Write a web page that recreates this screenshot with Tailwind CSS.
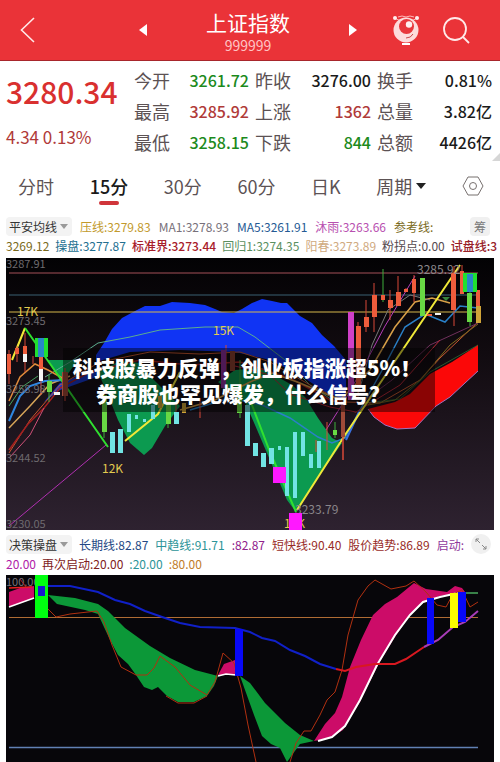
<!DOCTYPE html>
<html lang="zh-CN">
<head>
  <meta charset="UTF-8" />
  <meta name="viewport" content="width=device-width, initial-scale=1.0" />
  <title>上证指数 999999</title>
  <script src="https://cdn.jsdelivr.net/npm/@tailwindcss/browser@4"></script>
</head>
<body class="bg-white font-['Noto_Sans_CJK_SC',sans-serif] text-[#5c5254] overflow-x-hidden">

  <!-- top bar -->
  <header class="flex items-center h-[61px] bg-[#ea3338] border-b border-[#a8262c] pl-5 pr-[30px] text-white">
    <button aria-label="返回" class="w-4">
      <svg viewBox="0 0 16 28" class="w-4 h-7" fill="none" stroke="#ffe9e9" stroke-width="1.6"><path d="M14 2 1.500 14 14 26" /></svg>
    </button>
    <div class="flex flex-1 items-center justify-between pl-[102px] pr-[34px]">
      <button aria-label="上一个">
        <svg viewBox="0 0 10 12" class="w-[10px] h-3" fill="#fff"><path d="M9 0v12L1 6z" /></svg>
      </button>
      <div class="text-center pt-1">
        <h1 class="text-[21px] leading-[26px]">上证指数</h1>
        <p class="text-[14px] leading-5 text-[#ffc4c4]">999999</p>
      </div>
      <button aria-label="下一个">
        <svg viewBox="0 0 10 12" class="w-[10px] h-3" fill="#fff"><path d="M1 0v12l8-6z" /></svg>
      </button>
    </div>
    <div class="flex items-center gap-[22px]">
      <button aria-label="助手">
        <svg viewBox="0 0 28 32" class="w-7 h-8">
          <path d="M3 4l5 3M25 4l-5 3M6 3q4-2 8 0 4-2 8 0" stroke="#ffb9b9" fill="none" />
          <circle cx="3" cy="4" r="2" fill="#fff0f0" /><circle cx="25" cy="4" r="2" fill="#fff0f0" />
          <circle cx="14" cy="16" r="12.500" fill="#fddcdc" />
          <circle cx="14.500" cy="12.500" r="7.500" fill="#e8373c" />
          <circle cx="17" cy="10.500" r="3.200" fill="#fff0f0" />
          <path d="M14 24q5 0 7-4" stroke="#c8484c" fill="none" />
          <path d="M10 30h8" stroke="#fff" stroke-width="2" />
        </svg>
      </button>
      <button aria-label="搜索">
        <svg viewBox="0 0 28 28" class="w-7 h-7" fill="none" stroke="#ffe9e9" stroke-width="1.800"><circle cx="13" cy="13" r="11" /><path d="M21 21l6 6" /></svg>
      </button>
    </div>
  </header>

  <!-- quote -->
  <section class="relative flex justify-between pl-[6px] pr-2 pt-1 h-[100px]">
    <div>
      <p class="text-[30px] leading-[32px] font-medium text-[#d9302f] pt-[10px]">3280.34</p>
      <p class="text-[17px] leading-5 text-[#b03a38] pt-5">4.34 0.13%</p>
    </div>
    <dl class="grid content-start grid-cols-[36px_85px_36px_86px_36px_79px] text-[18px] leading-[31px] [&>dd]:text-right [&>dd]:text-[16px] [&>dd]:leading-[31px] [&>dd]:font-medium">
      <dt>今开</dt><dd class="text-[#1c8a1c] pr-[6px]">3261.72</dd>
      <dt>昨收</dt><dd class="text-[#1a1a1a] pr-[6px]">3276.00</dd>
      <dt>换手</dt><dd class="text-[#1a1a1a]">0.81%</dd>
      <dt>最高</dt><dd class="text-[#b03a38] pr-[6px]">3285.92</dd>
      <dt>上涨</dt><dd class="text-[#b03a38] pr-[6px]">1362</dd>
      <dt>总量</dt><dd class="text-[#1a1a1a]">3.82亿</dd>
      <dt>最低</dt><dd class="text-[#1c8a1c] pr-[6px]">3258.15</dd>
      <dt>下跌</dt><dd class="text-[#1c8a1c] pr-[6px]">844</dd>
      <dt>总额</dt><dd class="text-[#1a1a1a]">4426亿</dd>
    </dl>
    <svg viewBox="0 0 8 8" class="absolute right-0 bottom-0 w-2 h-2" fill="#d6d6d6"><path d="M8 0v8H0z" /></svg>
  </section>

  <!-- period tabs -->
  <nav class="flex items-center justify-between h-[56px] pl-[18px] pr-4 pb-[6px] text-[18px] leading-6">
    <button>分时</button>
    <button class="relative font-medium text-[#1a1a1a]">15分<span class="absolute left-1/2 -ml-[10px] -bottom-[7px] w-5 h-1 rounded-sm bg-[#d0353a]"></span></button>
    <button>30分</button>
    <button>60分</button>
    <button>日K</button>
    <button class="flex items-center gap-1">周期
      <svg viewBox="0 0 10 6" class="w-[10px] h-[6px]" fill="#222"><path d="M0 0h10L5 6z" /></svg>
    </button>
    <button aria-label="设置">
      <svg viewBox="0 0 22 20" class="w-[22px] h-5" fill="none" stroke="#77706f"><path d="M6 1h10l5 9-5 9H6l-5-9z" /><circle cx="11" cy="10" r="3.500" /></svg>
    </button>
  </nav>

  <!-- main chart legend -->
  <section class="pl-[6px] text-[12px] leading-[19px] whitespace-nowrap overflow-hidden">
    <div class="flex items-center gap-2">
      <button class="flex items-center gap-[3px] h-[19px] pl-[3px] pr-1 bg-[#f3f3f3] rounded text-[#333]">平安均线
        <svg viewBox="0 0 8 5" class="w-2 h-[5px]" fill="#999"><path d="M0 0h8L4 5z" /></svg>
      </button>
      <span class="text-[#c29a2c]">压线:3279.83</span>
      <span class="text-[#77707a]">MA1:3278.93</span>
      <span class="text-[#245a94]">MA5:3261.91</span>
      <span class="text-[#b850b0]">沐雨:3263.66</span>
      <span class="text-[#7a6a20]">参考线:</span>
      <button class="ml-auto mr-[10px] px-1 bg-[#f0f0f0] rounded text-[#777]">筹</button>
    </div>
    <div class="flex gap-[6px] pb-[3px]">
      <span class="text-[#7a6a20]">3269.12</span>
      <span class="text-[#236f90]">操盘:3277.87</span>
      <span class="font-medium text-[#a8202a]">标准界:3273.44</span>
      <span class="text-[#5a9060]">回归1:3274.35</span>
      <span class="text-[#d0aa80]">阳春:3273.89</span>
      <span class="text-[#554a50]">粉拐点:0.00</span>
      <span class="font-medium text-[#982028]">试盘线:3</span>
    </div>
  </section>

  <!-- main chart, drawn in screen units -->
  <section class="relative px-[6px]">
    <svg viewBox="6 258 488 272" class="block w-full" fill="none">
      <defs>
        <linearGradient id="night" x1="0" y1="0" x2="0" y2="1">
          <stop offset="0" stop-color="#030204" /><stop offset=".35" stop-color="#110b10" /><stop offset="1" stop-color="#2e2230" />
        </linearGradient>
      </defs>
      <rect x="6" y="258" width="488" height="272" fill="url(#night)" />

      <!-- cloud areas -->
      <path fill="#1034f4" d="M96 355 104 343 112 329 122 318 135 311 145 306 160 306 172 302 190 303 205 305 215 309 222 312 234 313 242 309 252 303 262 299 272 301 281 303 287 303 300 316 312 323 322 335 334 346 346 360V400L325 392 300 375 270 360 235 352 180 350 130 352 96 362z" />
      <path fill="#1638cc" d="M44 402 60 383 76 377 100 370 94 378 60 390z" />
      <path fill="#0c9a50" d="M48 360H78L62 382z" />
      <path fill="#0c9a50" d="M98 372 120 361 140 363 152 378 180 406 165 426 152 448 144 455 130 443 118 420 110 400z" />
      <path fill="#0c9a50" d="M218 382 235 370 262 368 292 385 305 397 318 418 332 438 342 443 316 480 296 512 287 500 270 460 255 425 245 402z" />
      <path fill="#fb0808" d="M368 409 395 402 410 394 430 374 452 362 478 345V371L465 383 450 397 436 406 415 428 397 429 385 425 374 417z" />
      <path stroke="#a070c0" d="M368 409 374 417 385 425 397 429 415 428 436 406 450 397 465 383 478 371" />

      <!-- levels -->
      <path stroke="#a55058" d="M9 273H478" /><path stroke="#3b6072" d="M9 295H478" /><path stroke="#d6b84c" d="M9 312H478" />

      <!-- moving averages -->
      <path stroke="#5cae90" d="M45 377 70 362 98 343 130 337 160 330 205 327 238 327 255 337 285 360 310 385 335 402" />
      <path stroke="#c85830" d="M9 453 30 420 60 385 100 362 150 352 200 354 240 352 270 362 310 385 345 402 380 403 420 380 440 358 478 322" />
      <path stroke="#a32020" stroke-width="1.500" d="M9 450 28 424 44 408 60 388 90 372 140 360 190 365 240 362 290 378 330 400 345 402" />
      <path stroke="#d05078" d="M10 457 30 435 44 408" />
      <path stroke="#e08a3a" stroke-width="1.500" d="M9 401 20 377 35 364 48 370 66 380" />
      <path stroke="#d6a458" stroke-width="1.500" d="M9 428 30 406 50 384 70 376" />
      <path stroke="#48a060" d="M9 406 22 387 38 376" />
      <path stroke="#2f86e0" stroke-width="2" d="M9 421 20 396 30 386 45 381 66 380" />
      <path stroke="#2a80c8" stroke-width="1.500" d="M190 410 230 398 262 405 290 418 318 437 332 443 345 438 360 410 385 365 405 327 425 314 445 322 460 306 478 308" />
      <path stroke="#3870e0" stroke-width="2" d="M346 440 360 410" />
      <path stroke="#d8a048" stroke-width="1.500" d="M180 410 215 400 250 382 272 373 300 383 340 400 370 370 395 327 415 302 432 298 450 303" />
      <path stroke="#787878" d="M358 395 372 345 388 310 410 295 430 300" />
      <path stroke="#b43cb8" d="M326 430 345 400 366 362 385 326 415 276" />
      <path stroke="#70305c" d="M362 402 392 380 430 345 478 323" />
      <path stroke="#b82838" d="M235 366 270 375 290 394 330 407 356 412 400 385 440 340" />
      <path stroke="#806820" d="M368 405 395 400 420 380 450 345 478 324" />
      <path stroke="#388c40" d="M366 403 400 399 430 372 478 345" stroke-opacity=".6" />

      <!-- trend lines -->
      <path stroke="#b030b0" d="M9 526 106 445" />
      <path stroke="#f0e838" stroke-width="2" d="M12 360 25 328M125 441 158 414 180 372M297 510 345 435 460 265" />
      <path stroke="#30e030" stroke-width="2" d="M25 328 60 378 108 447M250 400 270 452 296 512" />

      <!-- candles -->
      <g stroke="#d84838"><path d="M9 350V384M17 346V362M25 333V372M33 356V364M41 345V395M65 368V401M176 402V420M200 398V418M226 345V372M316 440V452M327 422V450M343 420V460M358 322V400M366 300V332M374 283V332M390 290V320M398 276V304M406 288V292M414 275V302M454 266V326M462 265V290M343 395V460" /></g>
      <g stroke="#3fae3c"><path d="M49 375V402M104 400V438M168 400V428M240 360V418M335 422V438M383 269V302M470 290V326" /></g>
      <g fill="#ee5c3c">
        <path d="M7 354h4v20H7zM15 348h4v6h-4zM23 346h4v8h-4zM39 357h4v12h-4zM356 326h5v60h-5zM364 317h5v10h-5zM372 295h5v22h-5zM381 295h4v5h-4zM388 300h5v8h-5zM396 292h5v14h-5zM404 289h4v3h-4zM412 279h4v14h-4zM427 314h5v2h-5zM451 273h5v37h-5zM460 271h4v23h-4zM476 290h4v16h-4z" />
      </g>
      <path fill="#a04a38" d="M62 372h6v24h-6zM341 400h4v37h-4z" />
      <path fill="#f4f4f4" d="M23 354h4v8h-4zM39 369h4v12h-4zM54 392h6v3h-6zM435 313h6v2h-6z" />
      <path fill="#68d844" d="M47 381h5v11h-5zM102 395h5v37h-5zM166 392h5v32h-5zM420 278h5v38h-5zM467 293h5v29h-5zM237 385h5v28h-5zM333 430h4v5h-4z" />
      <path fill="#20e030" d="M35 338h13v19H35zM463 273h14v19h-14z" /><path fill="#2886c8" d="M38 338h6v19h-6zM467 274h6v18h-6z" />
      <path fill="#72e4e4" d="M110 432h5v21h-5zM118 429h5v24h-5zM127 414h4v18h-4zM135 415h3v4h-3zM143 419h3v3h-3zM151 405h4v14h-4zM174 412h5v12h-5zM245 405h5v41h-5zM253 443h5v13h-5zM261 453h5v14h-5zM269 448h5v16h-5zM278 446h3v4h-3zM285 447h4v49h-4zM293 432h4v66h-4zM301 432h4v24h-4zM309 454h4v14h-4zM317 441h4v27h-4z" />
      <path fill="#d0a438" d="M158 396h4v12h-4zM182 403h4v10h-4zM476 306h5v17h-5z" />
      <path fill="#d040c8" d="M348 312h6v88h-6z" /><path fill="#8c309c" d="M221 350h5v38h-5z" /><path fill="#8a4030" d="M230 351h5v20h-5z" />
      <path fill="#38843c" d="M442 297h8l-4 4z" />
      <rect x="273" y="467" width="13" height="16" fill="#ff18ff" />

      <!-- labels -->
      <g font-size="11" fill="#6f6b6f">
        <text x="6" y="268">3287.91</text><text x="6" y="325">3273.45</text>
        <text x="6" y="393">3258.98</text><text x="6" y="462">3244.52</text>
        <text x="6" y="528">3230.05</text>
      </g>
      <g font-size="12" fill="#8a868a">
        <text x="417" y="274">3285.92</text><text x="295" y="514">3233.79</text>
      </g>
      <g font-size="12" fill="#e4cc50">
        <text x="17" y="316">17K</text><text x="213" y="335">15K</text><text x="102" y="473">12K</text><text x="284" y="528">11K</text>
      </g>
      <rect x="289" y="513" width="13" height="17" fill="#ff18ff" />
    </svg>

    <!-- headline -->
    <p class="absolute left-[63px] right-[65px] top-[90px] py-[6px] pr-3 bg-black/45 text-center text-[21px] leading-[26px] font-black text-white whitespace-nowrap"><span class="pl-2">科技股暴力反弹，创业板指涨超5%！</span><br />券商股也罕见爆发，什么信号？</p>
  </section>

  <!-- second chart legend -->
  <section class="pl-[6px] pt-1 text-[12px] leading-[19px] whitespace-nowrap overflow-hidden">
    <div class="flex items-center gap-[7px]">
      <button class="flex items-center gap-[3px] h-[19px] pl-[3px] pr-1 bg-[#f3f3f3] rounded text-[#333]">决策操盘
        <svg viewBox="0 0 8 5" class="w-2 h-[5px]" fill="#999"><path d="M0 0h8L4 5z" /></svg>
      </button>
      <span class="text-[#244884]">长期线:82.87</span>
      <span class="text-[#2c9498]">中趋线:91.71</span>
      <span class="text-[#90208c]">:82.87</span>
      <span class="text-[#982c28]">短快线:90.40</span>
      <span class="text-[#982c28]">股价趋势:86.89</span>
      <span class="text-[#90389c]">启动:</span>
      <button aria-label="展开" class="ml-auto mr-[10px] p-1 rounded-full bg-[#f0f0f0]">
        <svg viewBox="0 0 12 12" class="w-3 h-3" fill="none" stroke="#888"><path d="M1 4V1h3M1 1l4 4M11 8v3H8M11 11 7 7" /></svg>
      </button>
    </div>
    <div class="flex gap-[6px] pb-[2px]">
      <span class="text-[#b020a8]">20.00</span>
      <span class="text-[#802020]">再次启动:20.00</span>
      <span class="text-[#2c9498]">:20.00</span>
      <span class="text-[#c07c28]">:80.00</span>
    </div>
  </section>

  <!-- second chart -->
  <section class="px-[6px]">
    <svg viewBox="6 575 488 187" class="block w-full" fill="none">
      <rect x="6" y="575" width="488" height="187" fill="#07060a" />
      <text x="6" y="586" font-size="11" fill="#77737a">100.00</text>
      <path stroke="#b06c34" d="M9 617.500H478" /><path stroke="#6080b4" stroke-width="1.500" d="M9 747.500H478" />

      <!-- bands -->
      <path fill="#cc0c68" d="M9 592 20 588 34 586V598L9 607z" />
      <path stroke="#fff" stroke-width="1.500" d="M9 607 34 598" /><path stroke="#e82020" stroke-width="1.500" d="M9 588 32 587" /><path stroke="#b02028" d="M20 579 26 587" />
      <path fill="#0c9838" d="M48 595 75 598 98 604 108 611 125 628 150 646 170 658 195 670 218 676 214 686 207 696 194 702 178 702 167 696 158 687 152 690 144 687 136 675 128 664 118 655 110 640 98 614 85 610 57 604z" />
      <path fill="#cc0c68" d="M218 675 224 664 235 660V675z" /><path stroke="#fff" stroke-width="1.500" d="M218 676 226 674 236 675" />
      <path fill="#0c9838" d="M240 676 250 683 265 703 285 723 300 735 314 741 300 744 287 762 280 748 271 744 262 736 254 715z" />
      <path fill="#cc0c68" d="M314 741 325 724 335 713 342 697 350 667 361 640 373 615 385 604 397 597 414 583 426 589 447 592 455 586 462 588 465 592 440 596 423 603 410 615 395 637 378 665 360 702 343 730 330 738z" />
      <path stroke="#fff" stroke-width="2" d="M318 741 332 737 345 726 360 700 377 665 395 635 410 615 423 602 440 597 458 593" />

      <!-- lines -->
      <path stroke="#1020c8" stroke-width="2" d="M48 586 70 586 98 592 115 600 130 604 145 611 165 618 180 623 200 627 235 628 250 632 262 638 275 641 290 650 305 656 320 664 336 669" />
      <path stroke="#b03010" d="M48 609 56 617 70 614 97 611 104 622 112 645 121 667 136 675 147 675 154 668 160 656 175 667 190 685 207 695 215 682 223 653 234 663 241 688 248 725 256 762M166 696 178 703 194 703 207 696M290 762 296 743 304 731 311 731 320 715 327 700 335 692 342 670 348 635 358 600 368 586 375 580 391 589 406 586 414 581 426 592 437 605 446 607 453 594 462 590 470 607 478 602" />
      <path stroke="#d81820" stroke-width="2" d="M336 669 345 671 356 667 375 664 395 664 406 659 424 647" />
      <path stroke="#a83cb8" stroke-width="2" d="M424 647 438 640 453 627 465 622 478 611" />
      <path stroke="#388048" stroke-width="2" d="M464 593H478" />

      <!-- signal bars -->
      <rect x="35" y="575" width="13" height="43" fill="#00ff10" /><rect x="38" y="586" width="7" height="10" fill="#1818d0" />
      <rect x="235" y="629" width="8" height="47" fill="#0808f8" />
      <rect x="427" y="598" width="7" height="46" fill="#0808f8" />
      <rect x="458" y="592" width="8" height="30" fill="#0808f8" />
      <rect x="450" y="593" width="8" height="35" fill="#fcfc00" />
    </svg>
  </section>
</body>
</html>
